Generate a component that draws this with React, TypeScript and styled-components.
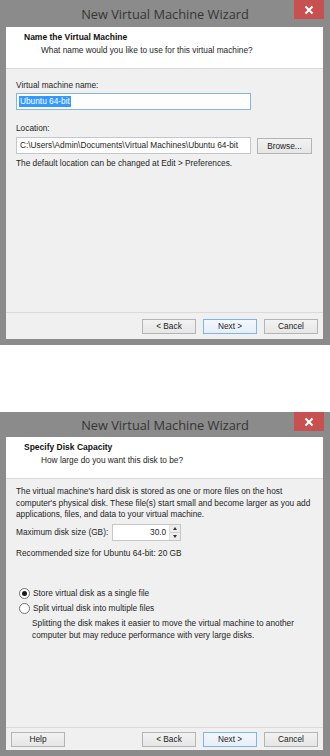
import styled, { createGlobalStyle } from "styled-components";

const GlobalStyle = createGlobalStyle`
  html, body {
    margin: 0;
    padding: 0;
    background: #fff;
  }
  body {
    font-family: "Liberation Sans", Arial, sans-serif;
    color: #1e1e1e;
  }
`;

const Page = styled.div`
  width: 330px;
  display: flex;
  flex-direction: column;
  gap: 67px;
`;

const Frame = styled.div<{ $height: number }>`
  height: ${(p) => p.$height}px;
  background: #8b8b8b;
  padding: 0 7px 6px 6px;
  box-sizing: border-box;
  display: flex;
  flex-direction: column;
`;

const TitleBar = styled.div<{ $height: number }>`
  height: ${(p) => p.$height}px;
  flex-shrink: 0;
  display: grid;
  grid-template-columns: 1fr auto 1fr;
  margin-left: -6px;
  margin-right: -7px;
`;

const TitleText = styled.div`
  grid-column: 2;
  align-self: center;
  font-family: "Open Sans", "Noto Sans", sans-serif;
  font-size: 12.8px;
  color: #353535;
  padding-top: 1px;
`;

const CloseButton = styled.div`
  grid-column: 3;
  justify-self: end;
  align-self: start;
  width: 30px;
  height: 19px;
  margin-right: 6px;
  background: #c75050;
  display: flex;
  align-items: center;
  justify-content: center;
`;

const Client = styled.div`
  flex: 1;
  min-height: 0;
  display: flex;
  flex-direction: column;
  background: #f0f0f0;
`;

const Header = styled.div`
  height: 42px;
  flex-shrink: 0;
  box-sizing: border-box;
  background: #fff;
  border-bottom: 1px solid #d9d9d9;
  padding: 4px 0 0 18px;
`;

const HeaderTitle = styled.div`
  font-size: 8.5px;
  font-weight: 700;
  line-height: 12px;
  color: #111;
`;

const HeaderSub = styled.div`
  font-size: 8.3px;
  line-height: 13px;
  padding-left: 17px;
  margin-top: 1px;
`;

const Body = styled.div<{ $top: number }>`
  flex: 1;
  padding: ${(p) => p.$top}px 10px 0 10px;
  display: flex;
  flex-direction: column;
`;

const Text = styled.div<{ $mt?: number; $indent?: number }>`
  font-size: 8.3px;
  line-height: 12px;
  margin-top: ${(p) => p.$mt ?? 0}px;
  padding-left: ${(p) => p.$indent ?? 0}px;
  white-space: pre-line;
`;

const TextBox = styled.div<{ $focused?: boolean; $width: number }>`
  width: ${(p) => p.$width}px;
  height: 17px;
  box-sizing: border-box;
  background: #fff;
  border: 1px solid ${(p) => (p.$focused ? "#86b6e8" : "#c4c6ca")};
  font-size: 8.3px;
  line-height: 15px;
  padding: 0 3px;
  display: flex;
  align-items: center;
  white-space: nowrap;
  overflow: hidden;
`;

const Selected = styled.span`
  background: #3399ff;
  color: #fff;
  line-height: 11px;
  padding: 0 1px;
  margin-left: -1px;
`;

const Row = styled.div<{ $mt?: number; $gap: number }>`
  display: flex;
  align-items: center;
  gap: ${(p) => p.$gap}px;
  margin-top: ${(p) => p.$mt ?? 0}px;
`;

const Button = styled.div<{ $default?: boolean; $width?: number }>`
  width: ${(p) => p.$width ?? 54}px;
  height: 15px;
  box-sizing: border-box;
  border: 1px solid ${(p) => (p.$default ? "#7eb4ea" : "#b4b4b4")};
  background: ${(p) =>
    p.$default
      ? "linear-gradient(#f3f8fd, #e6eef8)"
      : "linear-gradient(#f2f2f2, #e6e6e6)"};
  font-size: 8.3px;
  display: flex;
  align-items: center;
  justify-content: center;
  color: #222;
`;

const Footer = styled.div<{ $height: number }>`
  height: ${(p) => p.$height}px;
  flex-shrink: 0;
  box-sizing: border-box;
  border-top: 1px solid #dadada;
  display: flex;
  align-items: center;
  gap: 7px;
  padding: 0 5px 0 5px;
`;

const Spacer = styled.div`
  flex: 1;
`;

const SpinBox = styled.div`
  width: 69px;
  height: 17px;
  box-sizing: border-box;
  background: #fff;
  border: 1px solid #c4c6ca;
  display: flex;
  align-items: stretch;
`;

const SpinValue = styled.div`
  flex: 1;
  font-size: 8.3px;
  text-align: right;
  padding-right: 3px;
  line-height: 15px;
`;

const SpinArrows = styled.div`
  width: 10px;
  display: flex;
  flex-direction: column;
  border-left: 1px solid #e0e0e0;
`;

const SpinArrow = styled.div<{ $down?: boolean }>`
  flex: 1;
  background: #ededed;
  border-bottom: ${(p) => (p.$down ? "none" : "1px solid #d0d0d0")};
  display: flex;
  align-items: center;
  justify-content: center;
  &::after {
    content: "";
    border-left: 2.5px solid transparent;
    border-right: 2.5px solid transparent;
    ${(p) =>
      p.$down
        ? "border-top: 3px solid #333;"
        : "border-bottom: 3px solid #333;"}
  }
`;

const RadioRow = styled.div<{ $mt?: number }>`
  display: flex;
  align-items: center;
  gap: 3px;
  height: 15px;
  margin-top: ${(p) => p.$mt ?? 0}px;
  margin-left: 3px;
  font-size: 8.3px;
`;

const RadioCircle = styled.div<{ $checked?: boolean }>`
  width: 11px;
  height: 11px;
  box-sizing: border-box;
  border-radius: 50%;
  border: 1px solid #707070;
  background: #fff;
  display: flex;
  align-items: center;
  justify-content: center;
  &::after {
    content: "";
    width: 5px;
    height: 5px;
    border-radius: 50%;
    background: ${(p) => (p.$checked ? "#1a1a1a" : "transparent")};
  }
`;

const CloseIcon = () => (
  <svg width="10" height="10" viewBox="0 0 10 10">
    <path d="M1.5 1.5 L8.5 8.5 M8.5 1.5 L1.5 8.5" stroke="#fff" strokeWidth="2" />
  </svg>
);

const Window = ({
  height,
  titleHeight,
  title,
  subtitle,
  footerHeight,
  help,
  bodyTop,
  children,
}: {
  height: number;
  titleHeight: number;
  title: string;
  subtitle: string;
  footerHeight: number;
  help?: boolean;
  bodyTop: number;
  children: React.ReactNode;
}) => (
  <Frame $height={height}>
    <TitleBar $height={titleHeight}>
      <TitleText>New Virtual Machine Wizard</TitleText>
      <CloseButton>
        <CloseIcon />
      </CloseButton>
    </TitleBar>
    <Client>
      <Header>
        <HeaderTitle>{title}</HeaderTitle>
        <HeaderSub>{subtitle}</HeaderSub>
      </Header>
      <Body $top={bodyTop}>{children}</Body>
      <Footer $height={footerHeight}>
        {help && <Button>Help</Button>}
        <Spacer />
        <Button>&lt; Back</Button>
        <Button $default>Next &gt;</Button>
        <Button>Cancel</Button>
      </Footer>
    </Client>
  </Frame>
);

const App = () => {
  return (
    <>
      <GlobalStyle />
      <Page>
        <Window
          height={345}
          titleHeight={27}
          title="Name the Virtual Machine"
          subtitle="What name would you like to use for this virtual machine?"
          footerHeight={27}
          bodyTop={10}
        >
          <Text>Virtual machine name:</Text>
          <TextBox $focused $width={235} style={{ marginTop: 2 }}>
            <Selected>Ubuntu 64-bit</Selected>
          </TextBox>
          <Text $mt={12}>Location:</Text>
          <Row $mt={3} $gap={6}>
            <TextBox $width={235}>
              C:\Users\Admin\Documents\Virtual Machines\Ubuntu 64-bit
            </TextBox>
            <Button $width={55} style={{ height: 16 }}>
              Browse...
            </Button>
          </Row>
          <Text $mt={3}>The default location can be changed at Edit &gt; Preferences.</Text>
        </Window>
        <Window
          height={344}
          titleHeight={25}
          title="Specify Disk Capacity"
          subtitle="How large do you want this disk to be?"
          footerHeight={23}
          help
          bodyTop={7}
        >
          <Text style={{ lineHeight: "11.5px" }}>
            {"The virtual machine's hard disk is stored as one or more files on the host\ncomputer's physical disk. These file(s) start small and become larger as you add\napplications, files, and data to your virtual machine."}
          </Text>
          <Row $mt={3} $gap={4}>
            <Text>Maximum disk size (GB):</Text>
            <SpinBox>
              <SpinValue>30.0</SpinValue>
              <SpinArrows>
                <SpinArrow />
                <SpinArrow $down />
              </SpinArrows>
            </SpinBox>
          </Row>
          <Text $mt={6}>Recommended size for Ubuntu 64-bit: 20 GB</Text>
          <RadioRow $mt={27}>
            <RadioCircle $checked />
            Store virtual disk as a single file
          </RadioRow>
          <RadioRow>
            <RadioCircle />
            Split virtual disk into multiple files
          </RadioRow>
          <Text $indent={16} $mt={1} style={{ lineHeight: "12.5px" }}>
            {"Splitting the disk makes it easier to move the virtual machine to another\ncomputer but may reduce performance with very large disks."}
          </Text>
        </Window>
      </Page>
    </>
  );
};

export default App;
